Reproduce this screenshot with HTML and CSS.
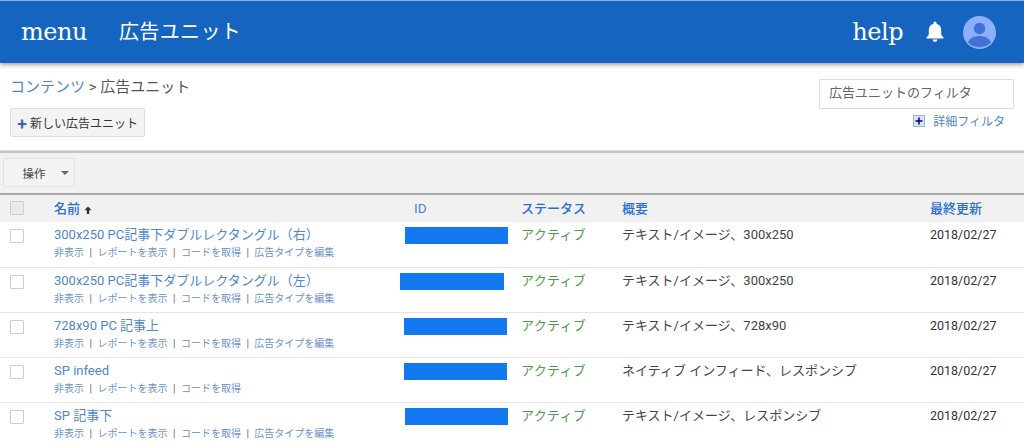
FILE: index.html
```html
<!DOCTYPE html>
<html lang="ja">
<head>
    <meta charset="UTF-8">
    <meta name="viewport" content="width=device-width, initial-scale=1.0">
    <title>広告ユニット</title>
    <link rel="stylesheet" href="styles.css">
</head>
<body>
    <header class="topbar">
        <span class="icon-word menu-word">menu</span>
        <span class="topbar-title">広告ユニット</span>
        <span class="topbar-right">
            <span class="icon-word">help</span>
            <svg class="bell" viewBox="0 0 20 24" width="20" height="24">
                <path d="M10 1.500a1.600 1.600 0 0 1 1.600 1.600v.7c3 .8 4.600 3.300 4.600 6.400v4.600l2.300 2.600v1H1.500v-1l2.300-2.600v-4.600c0-3.100 1.600-5.600 4.600-6.400v-.7A1.600 1.600 0 0 1 10 1.500z" fill="#fff"/>
                <path d="M7.600 19.600h4.800a2.400 2.400 0 0 1-4.800 0z" fill="#fff"/>
            </svg>
            <svg class="avatar" viewBox="0 0 33 33" width="33" height="33">
                <circle cx="16.500" cy="16.500" r="16.500" fill="#8ab0fb"/>
                <circle cx="16.500" cy="12.500" r="5.800" fill="#4272d7"/>
                <path d="M5 26.500c1.500-4.500 6.500-6.500 11.500-6.500s10 2 11.500 6.500a16.500 16.500 0 0 1-23 0z" fill="#4272d7"/>
            </svg>
        </span>
    </header>

    <section class="page-head">
        <div class="page-head-left">
            <div class="crumbs"><a href="#">コンテンツ</a> &gt; 広告ユニット</div>
            <button class="new-btn"><span class="plus">✚</span>新しい広告ユニット</button>
        </div>
        <div class="page-head-right">
            <div class="filter-box">広告ユニットのフィルタ</div>
            <a href="#" class="filter-link">
                <svg class="filter-icon" viewBox="0 0 12 12" width="12" height="12">
                    <rect x="0.500" y="0.500" width="11" height="11" fill="#dbe4f5" stroke="#9db2d8"/>
                    <path d="M6 2.500v7M2.500 6h7" stroke="#000080" stroke-width="1.500"/>
                </svg>
                詳細フィルタ
            </a>
        </div>
    </section>

    <div class="toolbar">
        <button class="action-btn">操作<span class="caret"></span></button>
    </div>

    <table class="units">
        <thead>
            <tr>
                <th class="col-check"><span class="check"></span></th>
                <th class="col-name">
                    <a href="#">名前</a>
                    <svg class="sort" viewBox="0 0 8 8" width="8" height="8">
                        <path d="M4 .5 7.500 4.200H5.200V8H2.800V4.200H.5z" fill="#333"/>
                    </svg>
                </th>
                <th class="col-id"><a href="#">ID</a></th>
                <th class="col-status"><a href="#">ステータス</a></th>
                <th class="col-desc"><a href="#">概要</a></th>
                <th class="col-date"><a href="#">最終更新</a></th>
            </tr>
        </thead>
        <tbody>
            <tr>
                <td><span class="check"></span></td>
                <td>
                    <a href="#" class="unit-name">300x250 PC記事下ダブルレクタングル（右）</a>
                    <div class="unit-links"><a href="#">非表示</a><i>|</i><a href="#">レポートを表示</a><i>|</i><a href="#">コードを取得</a><i>|</i><a href="#">広告タイプを編集</a></div>
                </td>
                <td><span class="redact redact-a"></span></td>
                <td class="active">アクティブ</td>
                <td class="desc">テキスト/イメージ、300x250</td>
                <td class="date">2018/02/27</td>
            </tr>
            <tr>
                <td><span class="check"></span></td>
                <td>
                    <a href="#" class="unit-name">300x250 PC記事下ダブルレクタングル（左）</a>
                    <div class="unit-links"><a href="#">非表示</a><i>|</i><a href="#">レポートを表示</a><i>|</i><a href="#">コードを取得</a><i>|</i><a href="#">広告タイプを編集</a></div>
                </td>
                <td><span class="redact redact-b"></span></td>
                <td class="active">アクティブ</td>
                <td class="desc">テキスト/イメージ、300x250</td>
                <td class="date">2018/02/27</td>
            </tr>
            <tr>
                <td><span class="check"></span></td>
                <td>
                    <a href="#" class="unit-name">728x90 PC 記事上</a>
                    <div class="unit-links"><a href="#">非表示</a><i>|</i><a href="#">レポートを表示</a><i>|</i><a href="#">コードを取得</a><i>|</i><a href="#">広告タイプを編集</a></div>
                </td>
                <td><span class="redact redact-c"></span></td>
                <td class="active">アクティブ</td>
                <td class="desc">テキスト/イメージ、728x90</td>
                <td class="date">2018/02/27</td>
            </tr>
            <tr>
                <td><span class="check"></span></td>
                <td>
                    <a href="#" class="unit-name">SP infeed</a>
                    <div class="unit-links"><a href="#">非表示</a><i>|</i><a href="#">レポートを表示</a><i>|</i><a href="#">コードを取得</a></div>
                </td>
                <td><span class="redact redact-c"></span></td>
                <td class="active">アクティブ</td>
                <td class="desc">ネイティブ インフィード、レスポンシブ</td>
                <td class="date">2018/02/27</td>
            </tr>
            <tr>
                <td><span class="check"></span></td>
                <td>
                    <a href="#" class="unit-name">SP 記事下</a>
                    <div class="unit-links"><a href="#">非表示</a><i>|</i><a href="#">レポートを表示</a><i>|</i><a href="#">コードを取得</a><i>|</i><a href="#">広告タイプを編集</a></div>
                </td>
                <td><span class="redact redact-a"></span></td>
                <td class="active">アクティブ</td>
                <td class="desc">テキスト/イメージ、レスポンシブ</td>
                <td class="date">2018/02/27</td>
            </tr>
        </tbody>
    </table>
</body>
</html>
```

FILE: styles.css
```css
html, body {
    height: 445px;
    overflow: hidden;
}
body {
    margin: 0;
    background-color: #fff;
    color: #444;
    font-family: Roboto, "Noto Sans CJK JP", sans-serif;
    font-size: 13px;
}
a {
    color: #4f86cf;
    text-decoration: none;
}
.topbar {
    display: flex;
    align-items: center;
    height: 62px;
    padding: 0 28px 0 21px;
    border-top: 1px solid #7fb0e6;
    background-color: #1565c0;
    color: #fff;
    box-shadow: 0 2px 4px rgba(0,0,0,0.35);
    box-sizing: content-box;
}
.icon-word {
    font-family: "DejaVu Serif", serif;
    font-size: 24px;
    letter-spacing: -0.5px;
}
.menu-word {
    margin-right: 32px;
}
.topbar-title {
    margin-bottom: 3px;
    font-family: "Noto Sans CJK JP", sans-serif;
    font-size: 20px;
    letter-spacing: 0.4px;
}
.topbar-right {
    display: flex;
    align-items: center;
    margin-left: auto;
}
.bell {
    margin-left: 22px;
}
.avatar {
    margin-left: 18px;
}
.page-head {
    display: flex;
    justify-content: space-between;
    height: 87px;
    border-bottom: 1px solid #ddd;
    box-sizing: content-box;
}
.page-head-left {
    padding: 14px 0 0 11px;
}
.crumbs {
    margin-left: -1px;
    font-size: 15px;
    line-height: 20px;
    color: #555;
}
.new-btn {
    display: block;
    height: 29px;
    margin: 11px 0 0 -1px;
    padding: 0 6px;
    border: 1px solid #ddd;
    border-radius: 2px;
    background-color: #f3f3f3;
    color: #333;
    font-family: inherit;
    font-size: 12px;
}
.plus {
    margin-right: 3px;
    color: #2a66b3;
    font-size: 10px;
}
.page-head-right {
    display: flex;
    flex-direction: column;
    align-items: flex-end;
    padding: 16px 10px 0 0;
}
.filter-box {
    width: 184px;
    height: 28px;
    padding-left: 9px;
    border: 1px solid #ddd;
    color: #666;
    font-size: 13px;
    line-height: 26px;
}
.filter-link {
    display: flex;
    align-items: center;
    gap: 8px;
    margin: 4px 9px 0 0;
    font-size: 12px;
    line-height: 18px;
}
.filter-icon {
    margin-top: -3px;
}
.toolbar {
    height: 44px;
    padding-top: 5px;
    box-sizing: border-box;
    border-top: 2px solid #c4c4c4;
    border-bottom: 2px solid #a8a8a8;
    background-color: #f1f1f1;
}
.action-btn {
    position: relative;
    width: 72px;
    height: 29px;
    margin-left: 3px;
    padding: 0 10px 0 0;
    border: 1px solid #e2e2e2;
    border-radius: 2px;
    background-color: #f3f3f3;
    color: #444;
    font-family: inherit;
    font-size: 11.500px;
}
.caret {
    position: absolute;
    right: 5px;
    top: 12px;
    border-top: 4px solid #666;
    border-left: 4px solid transparent;
    border-right: 4px solid transparent;
}
.units {
    width: 1024px;
    border-collapse: collapse;
    table-layout: fixed;
}
.units th {
    height: 27px;
    padding: 0 0 2px;
    box-sizing: border-box;
    background-color: #f1f1f1;
    font-weight: 500;
    font-size: 13px;
    text-align: left;
}
.units th a {
    color: #2a6fd0;
}
.sort {
    margin-left: 1px;
    vertical-align: -1px;
}
.units td {
    height: 45px;
    padding: 4px 0 0;
    border-bottom: 1px solid #e4e4e4;
    box-sizing: border-box;
    vertical-align: top;
}
.col-check {
    width: 54px;
}
.col-name {
    width: 346px;
}
.col-id {
    width: 121px;
}
.col-status {
    width: 101px;
}
.col-desc {
    width: 308px;
}
.units .col-id a {
    margin-left: 14px;
    font-weight: 400;
    font-size: 13.500px;
    color: #4f86cf;
}
.check {
    display: block;
    width: 12px;
    height: 12px;
    margin: 3px 0 0 10px;
    border: 1px solid #ccc;
    border-radius: 1px;
    background-color: #fff;
}
thead .check {
    background-color: #e9e9e9;
    margin-top: 0;
}
.unit-name {
    display: block;
    font-size: 13px;
    line-height: 17px;
}
.unit-links {
    margin-top: 3px;
    font-size: 10px;
    line-height: 14px;
}
.unit-links a {
    color: #6c93cf;
}
.unit-links i {
    margin: 0 5.500px;
    font-style: normal;
    color: #666;
}
.redact {
    display: block;
    width: 103px;
    height: 17px;
    margin-top: 1px;
    background-color: #1478f0;
}
.redact-a {
    margin-left: 5px;
}
.redact-b {
    width: 104px;
}
.redact-c {
    margin-left: 4px;
}
.active {
    color: #4a9a4a;
    font-size: 13px;
    line-height: 17px;
    letter-spacing: 0.3px;
}
.desc {
    color: #444;
    font-size: 13px;
    line-height: 17px;
}
.date {
    color: #333;
    font-size: 12.500px;
    line-height: 17px;
}
```
